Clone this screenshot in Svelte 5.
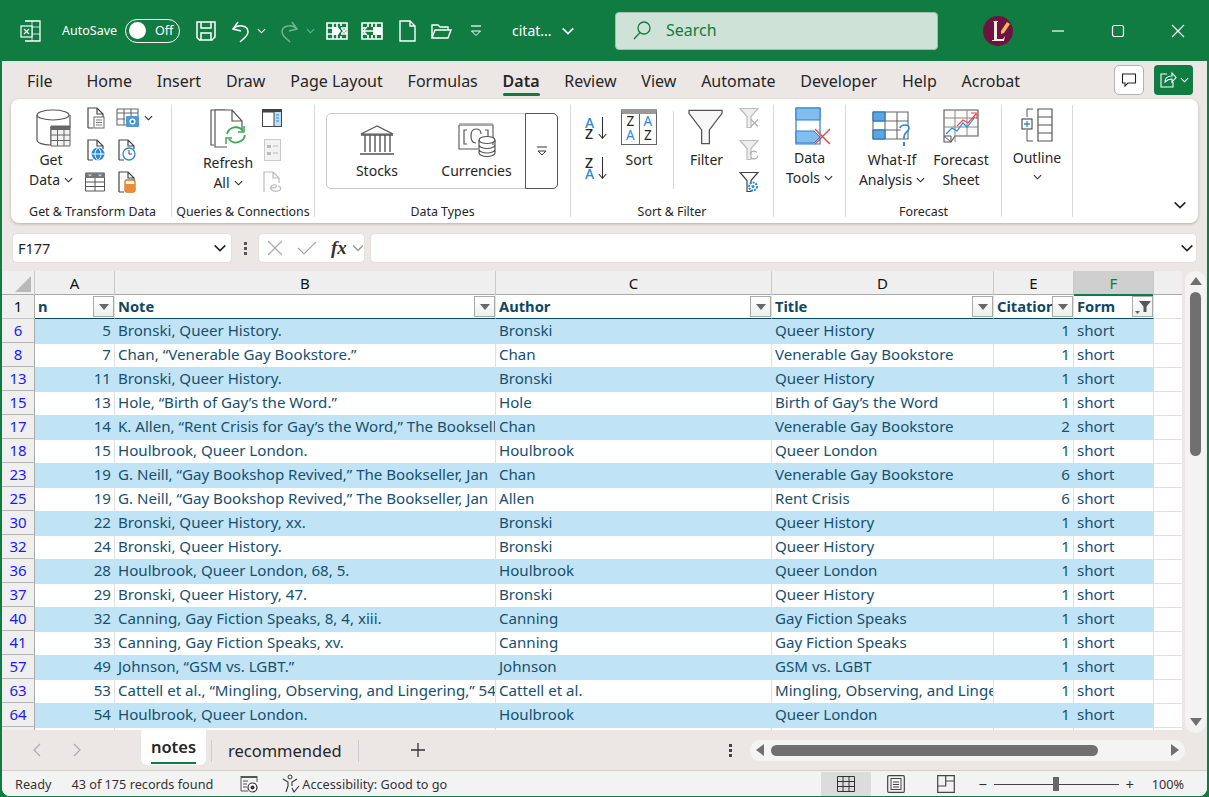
<script>
  const tabs = ['File', 'Home', 'Insert', 'Draw', 'Page Layout', 'Formulas', 'Data', 'Review', 'View', 'Automate', 'Developer', 'Help', 'Acrobat'];
  const columns = ['A', 'B', 'C', 'D', 'E', 'F'];
  const headers = ['n', 'Note', 'Author', 'Title', 'Citation', 'Form'];
  const rows = [
    [6, 5, 'Bronski, Queer History.', 'Bronski', 'Queer History', 1],
    [8, 7, 'Chan, “Venerable Gay Bookstore.”', 'Chan', 'Venerable Gay Bookstore', 1],
    [13, 11, 'Bronski, Queer History.', 'Bronski', 'Queer History', 1],
    [15, 13, 'Hole, “Birth of Gay’s the Word.”', 'Hole', 'Birth of Gay’s the Word', 1],
    [17, 14, 'K. Allen, “Rent Crisis for Gay’s the Word,” The Bookseller', 'Chan', 'Venerable Gay Bookstore', 2],
    [18, 15, 'Houlbrook, Queer London.', 'Houlbrook', 'Queer London', 1],
    [23, 19, 'G. Neill, “Gay Bookshop Revived,” The Bookseller, Jan', 'Chan', 'Venerable Gay Bookstore', 6],
    [25, 19, 'G. Neill, “Gay Bookshop Revived,” The Bookseller, Jan', 'Allen', 'Rent Crisis', 6],
    [30, 22, 'Bronski, Queer History, xx.', 'Bronski', 'Queer History', 1],
    [32, 24, 'Bronski, Queer History.', 'Bronski', 'Queer History', 1],
    [36, 28, 'Houlbrook, Queer London, 68, 5.', 'Houlbrook', 'Queer London', 1],
    [37, 29, 'Bronski, Queer History, 47.', 'Bronski', 'Queer History', 1],
    [40, 32, 'Canning, Gay Fiction Speaks, 8, 4, xiii.', 'Canning', 'Gay Fiction Speaks', 1],
    [41, 33, 'Canning, Gay Fiction Speaks, xv.', 'Canning', 'Gay Fiction Speaks', 1],
    [57, 49, 'Johnson, “GSM vs. LGBT.”', 'Johnson', 'GSM vs. LGBT', 1],
    [63, 53, 'Cattell et al., “Mingling, Observing, and Lingering,” 54', 'Cattell et al.', 'Mingling, Observing, and Lingering', 1],
    [64, 54, 'Houlbrook, Queer London.', 'Houlbrook', 'Queer London', 1]
  ];
</script>

{#snippet chev(cls = 'chev')}
  <svg class={cls} viewBox="0 0 10 6"><path d="M1 1l4 4 4-4" fill="none" stroke="currentColor" stroke-width="1.2" /></svg>
{/snippet}

{#snippet filterBtn(active = false)}
  <span class="fbtn">
    {#if active}
      <svg viewBox="0 0 18 18" width="18" height="18"><path d="M5 3h12l-4.500 5.500V14h-3V8.500z" fill="#555" /><path d="M1 13h5l-2.500 3z" fill="#666" /></svg>
    {:else}
      <svg viewBox="0 0 10 6" width="10" height="6"><path d="M0 0h10l-5 6z" fill="#666" /></svg>
    {/if}
  </span>
{/snippet}

{#snippet docBase(h = 22)}
  <path d="M2 {h - 1}V1h9l6 6v3M11 1v6h6M2 {h - 1}h5" fill="none" stroke="#444" stroke-width="1.2" />
{/snippet}

<div class="win">
  <header class="titlebar">
    <div class="tb-left">
      <svg class="xl" viewBox="0 0 22 22"><path d="M5 1h15v20H5" fill="none" stroke="#fff" stroke-width="1.3" /><path d="M5 7h15M5 14h15M12 1v20" stroke="#fff" stroke-width="1" opacity=".8" /><rect x="1" y="6" width="11" height="11" fill="#107c41" stroke="#fff" stroke-width="1.2" /><path d="M4 9l5 5M9 9l-5 5" stroke="#fff" stroke-width="1.3" /></svg>
      <span class="autosave">AutoSave</span>
      <span class="toggle"><i></i><b>Off</b></span>
      <svg class="qa save" viewBox="0 0 24 24"><path d="M3 3h18v15l-3 3H5.500L3 18.500zM7 3v6h10V3M7 21v-7h10v7" fill="none" stroke="#fff" stroke-width="1.5" /></svg>
      <svg class="qa undo" viewBox="0 0 24 24"><path d="M10 3L5 10l8 2M5 10c5-5 15-4 15 3 0 4-5 7-8 10" fill="none" stroke="#fff" stroke-width="1.5" /></svg>
      <span class="qc c1">{@render chev()}</span>
      <svg class="qa redo" viewBox="0 0 24 24"><path d="M14 3l5 7-8 2M19 10C14 5 4 6 4 13c0 4 5 7 8 10" fill="none" stroke="#6fb592" stroke-width="1.5" /></svg>
      <span class="qc c2">{@render chev()}</span>
      <svg class="qa q1" viewBox="0 0 24 24"><path d="M2 4h20v16H2zM2 9h6M2 15h6M16 9h6M16 15h6M8 4v4M8 16v4M16 4v3M16 17v3M12 4v4M12 16v4" fill="none" stroke="#fff" stroke-width="1.6" /><path d="M7 8h6l3 4-3 4H7z" fill="#fff" /><path d="M16.500 9.500l5 5M21.500 9.500l-5 5" stroke="#fff" stroke-width="1.6" /></svg>
      <svg class="qa q2" viewBox="0 0 24 24"><path d="M2 4h20v16H2zM2 9h4M2 15h4M16 9h6M16 15h6M8 4v4M8 16v4M16 4v4M16 16v4M12 4v4M12 16v4" fill="none" stroke="#fff" stroke-width="1.6" /><path d="M13 8h9v8h-9z" fill="#fff" /><path d="M3 12h10M7 8l-4 4 4 4" fill="none" stroke="#fff" stroke-width="1.4" /></svg>
      <svg class="qa q3" viewBox="0 0 24 24"><path d="M5 2h10l5 5v15H5zM15 2v5h5" fill="none" stroke="#fff" stroke-width="1.4" /></svg>
      <svg class="qa q4" viewBox="0 0 24 24"><path d="M3 19V6h6l2 2h8v3M3 19l3-8h16l-3 8z" fill="none" stroke="#fff" stroke-width="1.4" /></svg>
      <svg class="qa q5" viewBox="0 0 16 16"><path d="M3 3h10" stroke="#fff" stroke-width="1.2" /><path d="M3.500 8l4.500 4.500L12.500 8z" fill="none" stroke="#fff" stroke-width="1" /></svg>
      <span class="fname">citat...</span>
      <span class="qc c3">{@render chev()}</span>
    </div>
    <div class="search">
      <svg viewBox="0 0 20 20" width="20" height="20"><circle cx="12" cy="8" r="6" fill="none" stroke="#107c41" stroke-width="1.3" /><path d="M8 12.500L2 19" stroke="#107c41" stroke-width="1.3" /></svg>
      <span>Search</span>
    </div>
    <svg class="avatar" viewBox="0 0 30 30"><circle cx="15" cy="15" r="15" fill="#6e1240" /><path d="M11 5h4v1h-1v17h6l2-3-1 5H9v-1h2V6h-1z" fill="#f3ecdf" /><path d="M18 15l6-9 3 2-6 9-3 1z" fill="#f4b860" /></svg>
    <div class="winbtns">
      <span><svg viewBox="0 0 14 14" width="14" height="14"><path d="M1 7h12" stroke="#fff" stroke-width="1.2" /></svg></span>
      <span><svg viewBox="0 0 14 14" width="14" height="14"><rect x="1.500" y="1.500" width="11" height="11" rx="2" fill="none" stroke="#fff" stroke-width="1.2" /></svg></span>
      <span><svg viewBox="0 0 14 14" width="14" height="14"><path d="M1 1l12 12M13 1L1 13" stroke="#fff" stroke-width="1.2" /></svg></span>
    </div>
  </header>

  <div class="body">
    <nav class="tabs">
      {#each tabs as t}
        <span class="tab" class:active={t === 'Data'} class:file={t === 'File'}>{t}</span>
      {/each}
      <div class="tab-actions">
        <span class="comment"><svg viewBox="0 0 16 16" width="16" height="16"><path d="M1.500 2h13v9H7l-3 3v-3H1.500z" fill="none" stroke="#222" stroke-width="1.1" /></svg></span>
        <span class="share">
          <svg viewBox="0 0 18 18" width="18" height="18"><path d="M8 3H2v13h12v-5M6 11c0-4 3-6 7-6V2l4 4.500L13 11V8c-3 0-5 1-7 3z" fill="none" stroke="#fff" stroke-width="1.1" /></svg>
          {@render chev()}
        </span>
      </div>
    </nav>

    <section class="ribbon">
      <div class="grp g1">
        <div class="gbody">
          <div class="big getdata">
            <svg class="ic" width="35" height="38" viewBox="0 0 35 38">
              <path d="M1 6v25c0 3 6 5 14 5V18h19V6" fill="#fff" stroke="#555" stroke-width="1.2" />
              <ellipse cx="17" cy="6" rx="16" ry="5" fill="#fff" stroke="#555" stroke-width="1.2" />
              <path d="M15 17h19v20H15z" fill="#f2f2f2" stroke="#666" /><path d="M15 17h19v4H15z" fill="#666" /><path d="M15 26h19M15 31.500h19M21.500 21v16M28 21v16" stroke="#666" />
            </svg>
            <span>Get</span><span>Data {@render chev()}</span>
          </div>
          <div class="smalls">
            <svg width="20" height="22" viewBox="0 0 20 22">{@render docBase()}<rect x="8" y="10" width="10" height="11" fill="#fff" stroke="#666" /><path d="M10 13h6M10 15.500h6M10 18h6" stroke="#777" /></svg>
            <span class="withchev">
              <svg width="24" height="20" viewBox="0 0 24 20"><path d="M1 1h21v7M1 1v16h9M1 5h21M8 1v16M15 1v7M1 11h8" fill="none" stroke="#666" stroke-width="1.1" /><rect x="10" y="8" width="13" height="11" rx="1" fill="#4a9bd8" /><circle cx="16.500" cy="13.500" r="3" fill="#fff" /><circle cx="16.500" cy="13.500" r="1.500" fill="#2a7cc0" /></svg>
              {@render chev()}
            </span>
            <svg width="20" height="22" viewBox="0 0 20 22">{@render docBase()}<circle cx="12" cy="15" r="6.500" fill="#2b88d8" /><path d="M5.500 15h13M12 8.500c-4 4-4 9 0 13M12 8.500c4 4 4 9 0 13" stroke="#fff" fill="none" /></svg>
            <svg width="20" height="22" viewBox="0 0 20 22">{@render docBase()}<circle cx="12" cy="15" r="6" fill="#fff" stroke="#2b88d8" stroke-width="1.3" /><path d="M12 11v4h3" fill="none" stroke="#444" /></svg>
            <svg class="tbl" width="20" height="20" viewBox="0 0 20 20"><path d="M.5 1h19v18H.5z" fill="#fff" stroke="#555" /><path d="M0 1h20v5H0z" fill="#777" /><path d="M3 2.500l2 2 2-2zM13 2.500l2 2 2-2z" fill="#bfe3ff" /><path d="M0 10h20M0 14.500h20M10 6v13" stroke="#555" /></svg>
            <svg width="20" height="22" viewBox="0 0 20 22">{@render docBase()}<rect x="8" y="9" width="10" height="12" rx="2" fill="#fff" stroke="#d9701e" stroke-width="1.3" /><path d="M8 13h10v6a2 2 0 01-2 2h-6a2 2 0 01-2-2z" fill="#ed8b36" /></svg>
          </div>
        </div>
        <div class="glabel">Get &amp; Transform Data</div>
      </div>

      <div class="grp g2">
        <div class="gbody">
          <div class="big refresh">
            <svg class="ic" width="38" height="40" viewBox="0 0 38 40"><path d="M5 36H2V1h14" fill="none" stroke="#555" stroke-width="1.2" /><path d="M6 1v37h12M6 1h17l10 11v8M23 1v11h10" fill="#fff" stroke="#555" stroke-width="1.2" /><path d="M18 25a9 9 0 0116-3M36 26a9 9 0 01-16 4" fill="none" stroke="#3fa75b" stroke-width="1.8" /><path d="M35 17v6h-6M17 35v-6h6" fill="none" stroke="#3fa75b" stroke-width="1.5" /></svg>
            <span>Refresh</span><span>All {@render chev()}</span>
          </div>
          <div class="scol">
            <svg width="20" height="18" viewBox="0 0 20 18"><rect x=".5" y=".5" width="19" height="17" fill="#fff" stroke="#444" /><path d="M0 .5h20v3H0z" fill="#444" /><rect x="12" y="3" width="7" height="14" fill="#bfdff5" /><path d="M12 3v14" stroke="#444" /><path d="M14 6h3M14 9h3M14 12h3" stroke="#2b88d8" /></svg>
            <svg width="17" height="22" viewBox="0 0 17 22"><rect x=".5" y=".5" width="16" height="21" fill="#f2f2f2" stroke="#ccc" /><path d="M3 6h4v3H3zM3 13h4v3H3z" fill="#bbb" /><path d="M9 7h5M9 14h5" stroke="#bbb" /></svg>
            <svg width="20" height="22" viewBox="0 0 20 22"><path d="M2 21V1h9l6 6v5M11 1v6h6" fill="none" stroke="#bbb" stroke-width="1.2" /><path d="M8 18c2-4 4 1 6-2s-4-3-5 0 3 5 7 4 3-5 0-5" fill="none" stroke="#bbb" stroke-width="1.2" /></svg>
          </div>
        </div>
        <div class="glabel">Queries &amp; Connections</div>
      </div>

      <div class="grp g3">
        <div class="gbody">
          <div class="gallery">
            <div class="gitem stocks">
              <svg width="36" height="32" viewBox="0 0 36 32"><path d="M18 1L2 9h32z" fill="#fff" stroke="#555" stroke-width="1.2" /><path d="M2 10h32M6 10v17M11 10v17M16 10v17M21 10v17M26 10v17M31 10v17M1 29h34" fill="none" stroke="#555" stroke-width="1.4" /></svg>
              <span>Stocks</span>
            </div>
            <div class="gitem currencies">
              <svg width="38" height="34" viewBox="0 0 38 34"><path d="M1 2h34v20M1 2v24h19" fill="none" stroke="#555" stroke-width="1.1" /><path d="M1 0h34" stroke="#777" /><path d="M9 7H6v14h3M27 7h3v8M18 6c-4 0-5 3-5 7s1 7 5 7" fill="none" stroke="#555" stroke-width="1.2" /><path d="M18 6c3 0 5 2 5 5" fill="none" stroke="#555" stroke-width="1.2" /><ellipse cx="29" cy="17" rx="8" ry="3.500" fill="#fff" stroke="#555" stroke-width="1.2" /><path d="M21 17v13c0 2 4 3.500 8 3.500s8-1.500 8-3.500V17M21 22c0 2 4 3.500 8 3.500s8-1.500 8-3.500M21 26.500c0 2 4 3.500 8 3.500s8-1.500 8-3.500" fill="none" stroke="#555" stroke-width="1.2" /></svg>
              <span>Currencies</span>
            </div>
            <div class="gmore"><svg width="12" height="10" viewBox="0 0 12 10"><path d="M1 1h10" stroke="#333" stroke-width="1.1" /><path d="M2 5h8l-4 4z" fill="none" stroke="#333" /></svg></div>
          </div>
        </div>
        <div class="glabel">Data Types</div>
      </div>

      <div class="grp g4">
        <div class="gbody">
          <div class="sortcol">
            <div class="azz">
              <span class="az"><b class="blue">A</b><b>Z</b></span>
              <svg width="9" height="22" viewBox="0 0 9 22"><path d="M4.500 0v21M.8 17l3.700 4.300L8.200 17" fill="none" stroke="#333" stroke-width="1.1" /></svg>
            </div>
            <div class="azz">
              <span class="az"><b>Z</b><b class="blue">A</b></span>
              <svg width="9" height="22" viewBox="0 0 9 22"><path d="M4.500 0v21M.8 17l3.700 4.300L8.200 17" fill="none" stroke="#333" stroke-width="1.1" /></svg>
            </div>
          </div>
          <div class="big sort">
            <span class="sortbox"><i class="ltrs"><b>Z</b><b class="blue">A</b></i><i class="ltrs"><b class="blue">A</b><b>Z</b></i></span>
            <span>Sort</span>
          </div>
          <div class="big filter">
            <svg class="ic" width="35" height="36" viewBox="0 0 36 36"><path d="M1 1h34v3L22 21v14h-8V21L1 4z" fill="#f7f7f7" stroke="#555" stroke-width="1.3" /></svg>
            <span>Filter</span>
          </div>
          <div class="scol fcol">
            <svg width="20" height="21" viewBox="0 0 20 21"><path d="M1 1h18l-7 8v11H8V9z" fill="#eee" stroke="#bbb" stroke-width="1.2" /><path d="M12 12l7 7M19 12l-7 7" stroke="#aaa" stroke-width="1.1" /></svg>
            <svg width="20" height="21" viewBox="0 0 20 21"><path d="M1 1h18l-7 8v11H8V9z" fill="#eee" stroke="#bbb" stroke-width="1.2" /><path d="M11 15a4 4 0 017-2M19 16a4 4 0 01-7 2" fill="none" stroke="#aaa" stroke-width="1.2" /></svg>
            <svg width="20" height="21" viewBox="0 0 20 21"><path d="M1 1h18l-7 8v11H8V9z" fill="#fff" stroke="#444" stroke-width="1.2" /><circle cx="14" cy="15" r="4" fill="#fff" stroke="#2b88d8" stroke-width="2" stroke-dasharray="2 1" /><circle cx="14" cy="15" r="1.500" fill="#2b88d8" /></svg>
          </div>
        </div>
        <div class="glabel">Sort &amp; Filter</div>
      </div>

      <div class="grp g5">
        <div class="gbody">
          <div class="big tools">
            <svg class="ic" width="36" height="38" viewBox="0 0 36 38"><path d="M1 1h24v36H1z" fill="#fff" stroke="#2b7cd3" stroke-width="1.2" /><path d="M1 1h24v12H1z" fill="#83bdee" stroke="#2b7cd3" /><path d="M1 24h18l6 6-6 6H1z" fill="#83bdee" stroke="#2b7cd3" /><path d="M20 22l15 15M35 22L20 37" stroke="#e84a4a" stroke-width="1.5" /></svg>
            <span>Data</span><span>Tools {@render chev()}</span>
          </div>
        </div>
      </div>

      <div class="grp g6">
        <div class="gbody">
          <div class="big whatif">
            <svg class="ic" width="40" height="36" viewBox="0 0 40 36"><path d="M1 1h35v27H1zM13 1v27M25 1v27M1 10h35M1 19h35" fill="#fff" stroke="#666" stroke-width="1.1" /><path d="M1 1h12v9H1zM1 19h12v9H1z" fill="#5aa5e2" stroke="#1f6fb8" /><path d="M28 17c1-4 9-4 9 0 0 4-5 4-5 9v2" fill="#fff" stroke="#2b88d8" stroke-width="1.7" /><path d="M32 31v4" stroke="#2b88d8" stroke-width="2" /></svg>
            <span>What-If</span><span>Analysis {@render chev()}</span>
          </div>
          <div class="big forecast">
            <svg class="ic" width="36" height="36" viewBox="0 0 36 36"><path d="M1 1h34v26H12l-4 6H1z" fill="#fafafa" stroke="#555" stroke-width="1.1" /><path d="M1 9h34M1 18h34M12 1v32M24 1v26" stroke="#888" /><path d="M1 27l7 6v-6z" fill="#fff" stroke="#555" /><path d="M3 25l6-6 5 3 6-8 4 4 8-10" fill="none" stroke="#2b88d8" stroke-width="1.2" /><path d="M14 17l6-6 5 3 8-9M28 4h6v6" fill="none" stroke="#e84a4a" stroke-width="1.2" /></svg>
            <span>Forecast</span><span>Sheet</span>
          </div>
        </div>
        <div class="glabel">Forecast</div>
      </div>

      <div class="grp g7">
        <div class="gbody">
          <div class="big outline">
            <svg class="ic" width="32" height="34" viewBox="0 0 32 34"><path d="M6 9V1h6M6 22v11h6" fill="none" stroke="#555" /><rect x="1" y="11" width="10" height="10" fill="#fff" stroke="#333" /><path d="M3 16h6M6 13v6" stroke="#2b88d8" stroke-width="1.3" /><path d="M17 1h14v32H17zM17 9h14M17 17h14M17 25h14" fill="none" stroke="#555" stroke-width="1.2" /></svg>
            <span>Outline</span>
            {@render chev()}
          </div>
        </div>
      </div>

      <div class="collapse">{@render chev('chev wide')}</div>
    </section>

    <div class="fbar">
      <div class="namebox"><span>F177</span>{@render chev('chev wide')}</div>
      <div class="vdots"><i></i><i></i><i></i></div>
      <div class="fnbtns">
        <svg width="16" height="16" viewBox="0 0 16 16"><path d="M1 1l14 14M15 1L1 15" stroke="#aaa" stroke-width="1.2" /></svg>
        <svg width="20" height="16" viewBox="0 0 20 16"><path d="M1 8l6 6L19 2" fill="none" stroke="#aaa" stroke-width="1.2" /></svg>
        <span class="fx">fx</span>
        {@render chev('chev wide grey')}
      </div>
      <div class="finput">{@render chev('chev wide')}</div>
    </div>

    <div class="sheetwrap">
      <div class="sheet">
        <div class="colhead">
          <div class="corner"><svg width="16" height="16" viewBox="0 0 16 16"><path d="M16 0v16H0z" fill="#b9b9b9" /></svg></div>
          {#each columns as c}
            <div class="chead" class:sel={c === 'F'}>{c}</div>
          {/each}
          <div class="chead rest"></div>
        </div>
        <div class="grid-row hdr">
          <div class="rhead first">1</div>
          {#each headers as h, i}
            <div class="cell hcell">
              <span class="htext">{h}</span>
              {@render filterBtn(i === 5)}
            </div>
          {/each}
          <div class="cell blank"></div>
        </div>
        {#each rows as r, i}
          <div class="grid-row" class:band={i % 2 === 0}>
            <div class="rhead">{r[0]}</div>
            <div class="cell num">{r[1]}</div>
            <div class="cell txt">{r[2]}</div>
            <div class="cell txt">{r[3]}</div>
            <div class="cell txt">{r[4]}</div>
            <div class="cell num">{r[5]}</div>
            <div class="cell txt">short</div>
            <div class="cell blank"></div>
          </div>
        {/each}
        <div class="grid-row">
          <div class="rhead"></div>
          <div class="cell"></div><div class="cell"></div><div class="cell"></div><div class="cell"></div><div class="cell"></div><div class="cell"></div><div class="cell blank"></div>
        </div>
      </div>
      <div class="vscroll">
        <svg width="12" height="8" viewBox="0 0 12 8"><path d="M6 0l6 8H0z" fill="#707070" /></svg>
        <div class="vtrack"><div class="vthumb"></div></div>
        <svg width="12" height="8" viewBox="0 0 12 8"><path d="M6 8l6-8H0z" fill="#707070" /></svg>
      </div>
    </div>

    <div class="sheettabs">
      <svg class="nav" width="10" height="14" viewBox="0 0 10 14"><path d="M8 1L2 7l6 6" fill="none" stroke="#aaa" stroke-width="1.2" /></svg>
      <svg class="nav n2" width="10" height="14" viewBox="0 0 10 14"><path d="M2 1l6 6-6 6" fill="none" stroke="#aaa" stroke-width="1.2" /></svg>
      <div class="stab on"><span>notes</span></div>
      <div class="stab other">recommended</div>
      <svg class="plus" width="16" height="16" viewBox="0 0 16 16"><path d="M8 1v14M1 8h14" stroke="#333" stroke-width="1.3" /></svg>
      <div class="vdots tabdots"><i></i><i></i><i></i></div>
      <div class="hscroll">
        <svg width="8" height="12" viewBox="0 0 8 12"><path d="M0 6l8-6v12z" fill="#707070" /></svg>
        <div class="htrack"><div class="hthumb"></div></div>
        <svg width="8" height="12" viewBox="0 0 8 12"><path d="M8 6L0 0v12z" fill="#707070" /></svg>
      </div>
    </div>

    <footer class="status">
      <span class="s-ready">Ready</span>
      <span class="s-rec">43 of 175 records found</span>
      <svg class="s-macro" width="18" height="18" viewBox="0 0 18 18"><path d="M1 1h16v2H1z" fill="#555" /><path d="M1 1v15h7M17 1v6" fill="none" stroke="#555" /><path d="M3 6h5M3 9h4M3 12h4" stroke="#555" /><circle cx="12.500" cy="12.500" r="4.500" fill="#fff" stroke="#333" stroke-width="1.2" /><circle cx="12.500" cy="12.500" r="2" fill="#333" /></svg>
      <span class="s-acc">
        <svg width="20" height="20" viewBox="0 0 20 20"><circle cx="9" cy="3" r="2" fill="none" stroke="#333" /><path d="M2 5l5 3v4l-2 6M16 5l-5 3v4M11 14l2 4 5-6" fill="none" stroke="#333" stroke-width="1.1" /></svg>
        Accessibility: Good to go
      </span>
      <div class="s-right">
        <span class="view on"><svg width="18" height="16" viewBox="0 0 18 16"><path d="M.5.500h17v15H.500zM6 .5v15M12 .5v15M.5 5.500h17M.5 10.500h17" fill="none" stroke="#333" /></svg></span>
        <span class="view"><svg width="18" height="18" viewBox="0 0 18 18"><rect x=".7" y=".7" width="16.600" height="16.600" rx="1" fill="none" stroke="#444" stroke-width="1.2" /><rect x="4" y="3.500" width="10" height="11" fill="none" stroke="#444" /><path d="M6 7h6M6 9.500h6M6 12h6" stroke="#444" /></svg></span>
        <span class="view"><svg width="18" height="18" viewBox="0 0 18 18"><path d="M.7.700h16.600v16.600H.700zM.7 11h8V.700M9 6h8" fill="none" stroke="#444" stroke-width="1.2" /></svg></span>
        <span class="zm minus">−</span>
        <div class="slider"><i></i></div>
        <span class="zm">+</span>
        <span class="pct">100%</span>
      </div>
    </footer>
  </div>
</div>

<style>
:global(body) {
  margin: 0;
  overflow: hidden;
}

.win {
  width: 1209px;
  height: 797px;
  background: #107c41;
  display: flex;
  flex-direction: column;
  font-family: "Noto Sans", "Open Sans", sans-serif;
  color: #262626;
  overflow: hidden;
}

svg {
  display: block;
  flex: none;
}

.titlebar {
  height: 61px;
  flex: none;
  display: flex;
  align-items: center;
  color: #fff;
}
.tb-left {
  width: 615px;
  flex: none;
  display: flex;
  align-items: center;
}
.xl { width: 22px; height: 22px; margin-left: 20px; }
.autosave { font-size: 12.5px; margin-left: 20px; width: 54px; white-space: nowrap; }
.toggle {
  margin-left: 9px;
  width: 55px;
  height: 24px;
  box-sizing: border-box;
  border: 1px solid #fff;
  border-radius: 12px;
  display: flex;
  align-items: center;
  padding-left: 3px;
}
.toggle i { width: 17px; height: 17px; background: #fff; border-radius: 50%; }
.toggle b { font-weight: 400; font-size: 12.5px; margin-left: 9px; }
.qa { width: 24px; height: 24px; }
.save { margin-left: 14px; }
.undo { margin-left: 10px; }
.qc { width: 10px; }
.c1 { margin-left: 5px; }
.redo { margin-left: 11px; }
.c2 { margin-left: 4px; color: #6fb592; }
.q1 { margin-left: 9px; }
.q2, .q3 { margin-left: 11px; }
.q4 { margin-left: 10px; }
.q5 { margin-left: 15px; width: 16px; height: 16px; }
.fname { margin-left: 28px; font-size: 14px; width: 46px; }
.c3 { margin-left: 3px; width: 14px; }
.c3 :global(svg) { width: 14px; height: 8px; }

.search {
  width: 323px;
  height: 38px;
  box-sizing: border-box;
  background: #cfe2d8;
  border: 1px solid #9fbfae;
  border-radius: 4px;
  display: flex;
  align-items: center;
  gap: 14px;
  padding: 0 0 2px 16px;
  color: #107c41;
  font-size: 16px;
}
.avatar { width: 30px; height: 30px; margin-left: 45px; }
.winbtns { display: flex; margin-left: 15px; }
.winbtns span { width: 60px; display: flex; justify-content: center; }

.body {
  flex: 1;
  min-height: 0;
  margin: 0 2px 1px 2px;
  background: #ece7e5;
  border-radius: 0 0 8px 8px;
  display: flex;
  flex-direction: column;
  overflow: hidden;
}

.tabs {
  height: 38px;
  flex: none;
  box-sizing: border-box;
  padding: 1px 0 0 82px;
  display: flex;
  align-items: center;
  gap: 24.8px;
  font-size: 16px;
}
.tab { position: relative; line-height: 24px; }
.tab.file { margin-left: -57px; margin-right: 9px; }
.tab.active { font-weight: 600; }
.tab.active::after {
  content: "";
  position: absolute;
  left: 0;
  right: 0;
  bottom: -3px;
  height: 3px;
  border-radius: 2px;
  background: #107c41;
}
.tab-actions {
  margin-left: auto;
  margin-top: -1px;
  display: flex;
  gap: 10px;
  padding-right: 14px;
}
.comment {
  width: 30px;
  height: 30px;
  box-sizing: border-box;
  background: #fff;
  border: 1px solid #b5b5b5;
  border-radius: 5px;
  display: flex;
  align-items: center;
  justify-content: center;
}
.share {
  width: 39px;
  height: 30px;
  background: #107c41;
  border-radius: 4px;
  color: #fff;
  display: flex;
  align-items: center;
  justify-content: center;
  gap: 3px;
}

.ribbon {
  height: 124px;
  flex: none;
  box-sizing: border-box;
  margin: 0 9px;
  padding: 6px 0;
  background: #fff;
  border-radius: 8px;
  box-shadow: 0 1px 3px rgba(0, 0, 0, .25);
  display: flex;
  font-size: 14px;
}
.grp {
  box-sizing: border-box;
  border-right: 1px solid #d8d8d8;
  display: flex;
  flex-direction: column;
  flex: none;
  height: 112px;
}
.gbody { flex: 1; display: flex; min-height: 0; }
.glabel {
  height: 14px;
  line-height: 14px;
  margin-bottom: -2px;
  font-size: 12.4px;
  text-align: center;
  white-space: nowrap;
}
.g1 { width: 161px; }
.g1 .glabel { padding-left: 3px; }
.g2 { width: 143px; }
.g3 { width: 256px; }
.g4 { width: 203px; }
.g5 { width: 72px; }
.g6 { width: 156px; }
.g7 { width: 71px; }

.big {
  display: flex;
  flex-direction: column;
  align-items: center;
  line-height: 20px;
  white-space: nowrap;
}
.big > span { height: 20px; display: flex; align-items: center; gap: 4px; }
.chev { width: 9px; height: 6px; flex: none; }
.chev.wide { width: 14px; height: 8px; }
.chev.grey { color: #999; width: 12px; }

.getdata { width: 76px; margin-left: 2px; padding-top: 4px; }
.getdata .ic { margin-left: 5px; margin-bottom: 3px; }
.smalls {
  display: grid;
  grid-template-columns: 32px 30px;
  grid-auto-rows: 26px;
  row-gap: 6px;
  align-items: center;
  justify-items: center;
  margin-left: -9px;
}
.withchev { display: flex; align-items: center; gap: 4px; justify-self: start; margin-left: 4px; }
.tbl { margin-left: -3px; }

.refresh { width: 112px; padding-top: 4px; }
.refresh .ic { margin-bottom: 4px; }
.scol {
  display: flex;
  flex-direction: column;
  align-items: center;
  gap: 6px;
  width: 20px;
  margin-left: -22px;
}
.scol > svg { height: 26px; }

.g3 .gbody { justify-content: center; padding-left: 11px; padding-right: 12px; }
.gallery {
  width: 232px;
  height: 76px;
  margin-top: 8px;
  box-sizing: border-box;
  border: 1px solid #c9c9c9;
  border-radius: 5px;
  display: flex;
}
.gitem {
  display: flex;
  flex-direction: column;
  align-items: center;
  justify-content: flex-end;
  padding-bottom: 8px;
  gap: 5px;
  line-height: 18px;
}
.stocks { width: 100px; }
.currencies { width: 99px; }
.gmore {
  flex: 1;
  margin: -1px;
  border: 1px solid #555;
  border-radius: 0 5px 5px 0;
  display: flex;
  align-items: center;
  justify-content: center;
}

.sortcol { display: flex; flex-direction: column; gap: 14px; width: 50px; padding-top: 10px; align-items: center; }
.azz { display: flex; gap: 4px; align-items: center; height: 26px; }
.az { display: flex; flex-direction: column; line-height: 11px; }
.az b { font-weight: 500; font-size: 14px; }
.blue { color: #2b88d8; }

.sort { width: 50px; padding-top: 4px; margin-left: -7px; }
.sortbox {
  box-sizing: border-box;
  width: 36px !important;
  height: 36px !important;
  margin-bottom: 5px;
  border: 1.5px solid #666;
  border-top: 5px solid #999;
  display: flex;
  gap: 0 !important;
  align-items: stretch !important;
}
.ltrs {
  flex: 1;
  display: flex;
  flex-direction: column;
  align-items: center;
  font-style: normal;
  line-height: 14px;
}
.ltrs + .ltrs { border-left: 1.5px solid #666; }
.ltrs b { font-weight: 400; font-size: 13.5px; }
.filter {
  width: 66px;
  margin-left: 9px;
  border-left: 1px solid #d8d8d8;
  height: 78px;
  box-sizing: border-box;
  margin-top: 6px;
}
.filter .ic { margin-bottom: 5px; margin-top: -2px; margin-right: 2px; }
.fcol { margin-left: -5px; width: 30px; }

.tools { width: 71px; padding-top: 2px; }
.tools .ic { margin-bottom: 3px; margin-left: 7px; }
.whatif { width: 80px; padding-top: 6px; margin-left: 6px; }
.whatif .ic { margin-bottom: 3px; }
.forecast { width: 58px; padding-top: 4px; margin-left: 0; }
.forecast .ic { margin-bottom: 5px; }
.outline { width: 70px; padding-top: 3px; }
.outline .ic { margin-bottom: 6px; }
.outline > .chev { margin-top: 6px; }
.collapse { margin-left: auto; padding: 96px 11px 0 0; }

.fbar {
  height: 30px;
  flex: none;
  margin: 10px 10px 8px 10px;
  display: flex;
  align-items: stretch;
}
.namebox, .fnbtns, .finput {
  box-sizing: border-box;
  background: #fff;
  border: 1px solid #e2e0de;
  border-radius: 5px;
  display: flex;
  align-items: center;
}
.namebox {
  width: 220px;
  padding: 0 4px 0 5px;
  justify-content: space-between;
  font-size: 14.5px;
}
.vdots {
  width: 26px;
  display: flex;
  flex-direction: column;
  align-items: center;
  justify-content: center;
  gap: 2px;
}
.vdots i { width: 3px; height: 3px; background: #555; }
.fnbtns { width: 107px; padding-left: 8px; gap: 14px; }
.fx { font-family: "Liberation Serif", serif; font-style: italic; font-size: 19px; font-weight: 700; color: #333; }
.fnbtns .chev { margin-left: -9px; }
.finput { flex: 1; margin-left: 5px; justify-content: flex-end; padding-right: 2px; }

.sheetwrap {
  flex: 1;
  min-height: 0;
  display: flex;
}
.sheet {
  flex: 1;
  min-width: 0;
  overflow: hidden;
  background: #fff;
  --cols: 33px 80px 381px 276px 222px 80px 80px 1fr;
}
.colhead {
  height: 24px;
  box-sizing: border-box;
  display: grid;
  grid-template-columns: var(--cols);
  background: #efefef;
  border-bottom: 1px solid #aaa;
  font-size: 15px;
}
.corner {
  display: flex;
  justify-content: flex-end;
  align-items: flex-end;
  padding: 0 3px 3px 0;
  border-right: 1px solid #c8c8c8;
}
.chead {
  border-right: 1px solid #c8c8c8;
  text-align: center;
  line-height: 24px;
  color: #111;
}
.chead.sel {
  background: #cfcfcf;
  color: #107c41;
  box-shadow: inset 0 -2px 0 #107c41;
  margin-bottom: -1px;
}
.chead.rest { border-right: 0; }

.grid-row {
  height: 24px;
  display: grid;
  grid-template-columns: var(--cols);
  font-size: 15.1px;
  color: #17506f;
}
.rhead {
  box-sizing: border-box;
  background: #efefef;
  border-right: 1px solid #aaa;
  border-bottom: 2px solid #b4b4b4;
  text-align: center;
  line-height: 23px;
  color: #1a1aff;
  font-size: 15px;
}
.rhead.first { color: #111; border-bottom: 1px solid #c4c4c4; }
.cell {
  box-sizing: border-box;
  border-right: 1px solid #e0e0e0;
  border-bottom: 1px solid #e0e0e0;
  padding: 0 3px;
  line-height: 23px;
  white-space: nowrap;
  overflow: hidden;
  min-width: 0;
}
.band .cell:not(.blank) { background: #c0e4f5; border-right-color: #c0e4f5; border-bottom-color: #c0e4f5; }
.num { text-align: right; }
.hcell {
  display: flex;
  align-items: center;
  justify-content: space-between;
  padding: 0 0 0 3px;
  font-size: 14.7px;
  font-weight: 700;
  color: #0f4761;
  border-bottom: 1px solid #0f4761;
}
.htext { overflow: hidden; flex: 1; min-width: 0; }
.fbtn {
  width: 21px;
  height: 21px;
  flex: none;
  box-sizing: border-box;
  background: linear-gradient(#fff, #eee);
  border: 1px solid #aaa;
  display: flex;
  align-items: center;
  justify-content: center;
}
.blank { border-right: 0; }

.vscroll {
  width: 21px;
  flex: none;
  margin: 0 1px -3px 3px;
  background: #f3f3f3;
  border-radius: 10px;
  display: flex;
  flex-direction: column;
  align-items: center;
  padding: 6px 0 7px;
  box-sizing: border-box;
}
.vtrack { flex: 1; width: 100%; display: flex; justify-content: center; padding-top: 7px; }
.vthumb { width: 11px; height: 164px; background: #707070; border-radius: 6px; }

.sheettabs {
  height: 40px;
  flex: none;
  display: flex;
  align-items: center;
}
.nav { margin-left: 30px; }
.nav.n2 { margin-left: 30px; }
.stab { font-size: 16.5px; white-space: nowrap; }
.stab.on {
  align-self: flex-start;
  margin-left: 59px;
  width: 65px;
  height: 35px;
  padding-top: 3px;
  box-sizing: border-box;
  background: #fff;
  border-radius: 0 0 6px 6px;
  font-weight: 600;
  display: flex;
  justify-content: center;
}
.stab.on span {
  height: 29px;
  line-height: 28px;
  border-bottom: 2px solid #107c41;
}
.stab.other {
  margin-left: 5px;
  margin-top: 1px;
  padding: 0 16px;
  line-height: 22px;
  border-left: 1px solid #ccc;
  border-right: 1px solid #ccc;
}
.plus { margin-left: 51px; }
.tabdots { width: 8px; margin-left: 301px; }
.tabdots i { background: #444; }
.hscroll {
  margin-left: 15px;
  width: 435px;
  height: 21px;
  background: #f4f4f4;
  border-radius: 10px;
  display: flex;
  align-items: center;
  padding: 0 6px;
  box-sizing: border-box;
}
.htrack { flex: 1; padding-left: 7px; }
.hthumb { width: 327px; height: 11px; border-radius: 6px; background: #707070; }

.status {
  height: 26px;
  flex: none;
  background: #f3f3f3;
  border-top: 1px solid #cfcfcf;
  display: flex;
  align-items: center;
  font-size: 12.7px;
  color: #333;
  padding-top: 1px;
  box-sizing: border-box;
}
.s-ready { margin-left: 13px; }
.s-rec { margin-left: 20px; }
.s-macro { margin-left: 27px; }
.s-acc { margin-left: 23px; display: flex; align-items: center; gap: 1px; }
.s-right { margin-left: auto; display: flex; align-items: center; height: 100%; padding-right: 23px; }
.view { width: 50px; height: 100%; display: flex; align-items: center; justify-content: center; }
.view.on { background: #dcdcdc; }
.zm { font-size: 15px; width: 18px; text-align: center; }
.minus { margin-left: 3px; }
.slider {
  width: 125px;
  height: 1px;
  background: #444;
  margin-left: 2px;
  display: flex;
  justify-content: center;
}
.slider i { width: 6px; height: 14px; margin-top: -7px; background: #666; }
.slider + .zm { margin-left: 2px; }
.pct { margin-left: 13px; }
</style>
